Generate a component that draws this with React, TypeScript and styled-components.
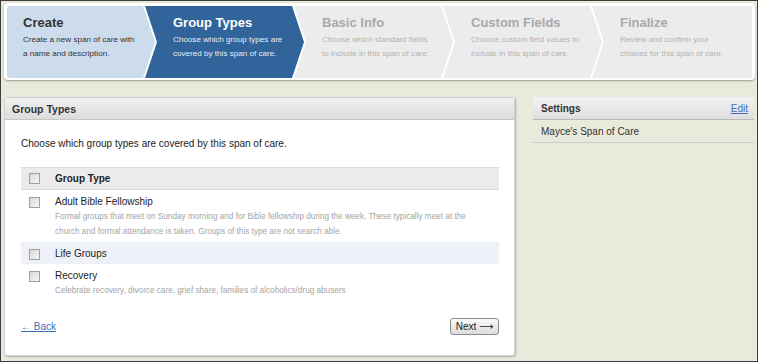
import styled, { createGlobalStyle } from "styled-components";

const GlobalStyle = createGlobalStyle`
  html, body {
    margin: 0;
    padding: 0;
    background: #e9e9dc;
  }
  body {
    font-family: "Liberation Sans", Arial, sans-serif;
    color: #222;
  }
`;

const Frame = styled.div`
  width: 758px;
  height: 362px;
  box-sizing: border-box;
  border: 1px solid #3c3c3c;
  background: #e9e9dc;
  padding: 2px 2px 0 3px;
  display: flex;
  flex-direction: column;
  overflow: hidden;
`;

const Wizard = styled.div`
  background: #fff;
  border-radius: 4px;
  padding: 3px 3px 2px 3px;
  box-shadow: 0 1px 2px rgba(0, 0, 0, 0.35);
`;

const Track = styled.div`
  display: flex;
  height: 72px;
  border-radius: 3px;
  overflow: hidden;
`;

type StepState = "done" | "active" | "todo";
type StepPos = "first" | "middle" | "last";

const clips: Record<StepPos, string> = {
  first: "polygon(0 0, calc(100% - 12px) 0, 100% 50%, calc(100% - 12px) 100%, 0 100%)",
  middle:
    "polygon(0 0, calc(100% - 12px) 0, 100% 50%, calc(100% - 12px) 100%, 0 100%, 12px 50%)",
  last: "polygon(0 0, 100% 0, 100% 100%, 0 100%, 12px 50%)",
};

const stepBg: Record<StepState, string> = {
  done: "#cddcec",
  active: "#31649a",
  todo: "#ececec",
};

const Step = styled.div<{ $state: StepState; $pos: StepPos }>`
  box-sizing: border-box;
  flex: ${(p) => (p.$pos === "last" ? "1" : "none")};
  width: ${(p) => (p.$pos === "first" ? "148px" : "159px")};
  margin-left: ${(p) => (p.$pos === "first" ? "0" : "-10px")};
  padding: 9px 0 0 ${(p) => (p.$pos === "first" ? "16px" : "28px")};
  background: ${(p) => stepBg[p.$state]};
  clip-path: ${(p) => clips[p.$pos]};
  color: ${(p) => (p.$state === "active" ? "#fff" : p.$state === "done" ? "#333" : "#a9a9a9")};
`;

const StepTitle = styled.div`
  font-size: 13px;
  font-weight: bold;
  line-height: 16px;
`;

const StepDesc = styled.div<{ $state: StepState }>`
  margin-top: 2px;
  font-size: 8.1px;
  line-height: 14px;
  color: ${(p) => (p.$state === "active" ? "#e6eef7" : p.$state === "done" ? "#333" : "#b2b2b2")};
`;

const Content = styled.div`
  display: flex;
  align-items: flex-start;
  gap: 18px;
  margin-top: 17px;
`;

const Panel = styled.div`
  width: 511px;
  box-sizing: border-box;
  background: #fff;
  border: 1px solid #d2d2d2;
  border-radius: 3px;
  box-shadow: 1px 1px 2px rgba(0, 0, 0, 0.25);
`;

const PanelHeader = styled.div`
  height: 22px;
  box-sizing: border-box;
  padding-left: 7px;
  display: flex;
  align-items: center;
  font-size: 10.5px;
  font-weight: bold;
  color: #333;
  background: linear-gradient(#f1f1f1, #dcdcdc);
  border-bottom: 1px solid #c6c6c6;
`;

const PanelBody = styled.div`
  padding: 17px 15px 20px 16px;
`;

const Intro = styled.div`
  font-size: 10px;
  line-height: 14px;
  color: #222;
  margin-bottom: 16px;
`;

const Table = styled.div`
  display: flex;
  flex-direction: column;
`;

const Row = styled.div<{ $variant?: "head" | "alt" }>`
  display: flex;
  box-sizing: border-box;
  padding: ${(p) => (p.$variant === "head" ? "0" : "5px 0 3px 0")};
  height: ${(p) => (p.$variant === "head" ? "23px" : "auto")};
  align-items: ${(p) => (p.$variant === "head" ? "center" : "flex-start")};
  background: ${(p) =>
    p.$variant === "head" ? "#ebebeb" : p.$variant === "alt" ? "#eef2f8" : "transparent"};
  border-top: ${(p) => (p.$variant === "head" ? "1px solid #dcdcdc" : "none")};
  border-bottom: ${(p) => (p.$variant === "head" ? "1px solid #dcdcdc" : "none")};
`;

const CheckCell = styled.div<{ $head?: boolean }>`
  width: 34px;
  flex: none;
  padding-left: 8px;
  padding-top: ${(p) => (p.$head ? "0" : "2px")};
  box-sizing: border-box;
  display: flex;
`;

const Check = styled.span`
  display: block;
  width: 11px;
  height: 11px;
  box-sizing: border-box;
  border: 1px solid #a0a0a0;
  background: linear-gradient(135deg, #d8d8d8, #f7f7f7);
`;

const NameCell = styled.div`
  flex: 1;
`;

const HeadLabel = styled.div`
  font-size: 10px;
  font-weight: bold;
  color: #222;
`;

const Name = styled.div`
  font-size: 10px;
  line-height: 14px;
  color: #222;
`;

const Desc = styled.div`
  margin-top: 0;
  font-size: 8.2px;
  line-height: 15px;
  color: #a4a4a4;
`;

const Footer = styled.div`
  display: flex;
  justify-content: space-between;
  align-items: center;
  margin-top: 17px;
`;

const BackLink = styled.a`
  font-size: 10px;
  color: #3b6fb6;
  text-decoration: underline;
  cursor: pointer;
`;

const Button = styled.button`
  width: 49px;
  height: 17px;
  padding: 0;
  box-sizing: border-box;
  font-family: "Liberation Sans", "DejaVu Sans", Arial, sans-serif;
  font-size: 10px;
  color: #222;
  border: 1px solid #8c8c8c;
  border-radius: 3px;
  background: linear-gradient(#fafafa, #dcdcdc);
`;

const Side = styled.div`
  width: 221px;
`;

const SideHeader = styled.div`
  height: 23px;
  box-sizing: border-box;
  padding: 0 6px 0 8px;
  display: flex;
  align-items: center;
  justify-content: space-between;
  background: linear-gradient(#f3f3f3, #dedede);
  border-bottom: 1px solid #b9b9b9;
`;

const SideTitle = styled.span`
  font-size: 10px;
  font-weight: bold;
  color: #333;
`;

const EditLink = styled.a`
  font-size: 10px;
  color: #3b6fb6;
  text-decoration: underline;
  cursor: pointer;
`;

const SideItem = styled.div`
  height: 23px;
  box-sizing: border-box;
  padding-left: 8px;
  display: flex;
  align-items: center;
  font-size: 10px;
  color: #333;
  border-bottom: 1px solid #c9c9c9;
`;

const steps: { title: string; lines: string[]; state: StepState }[] = [
  { title: "Create", lines: ["Create a new span of care with", "a name and description."], state: "done" },
  { title: "Group Types", lines: ["Choose which group types are", "covered by this span of care."], state: "active" },
  { title: "Basic Info", lines: ["Choose which standard fields", "to include in this span of care."], state: "todo" },
  { title: "Custom Fields", lines: ["Choose custom field values to", "include in this span of care."], state: "todo" },
  { title: "Finalize", lines: ["Review and confirm your", "choices for this span of care."], state: "todo" },
];

const groupTypes = [
  {
    name: "Adult Bible Fellowship",
    desc: [
      "Formal groups that meet on Sunday morning and for Bible fellowship during the week. These typically meet at the",
      "church and formal attendance is taken. Groups of this type are not search able.",
    ],
  },
  { name: "Life Groups", desc: [] },
  { name: "Recovery", desc: ["Celebrate recovery, divorce care, grief share, families of alcoholics/drug abusers"] },
];

export default function App() {
  return (
    <>
      <GlobalStyle />
      <Frame>
        <Wizard>
          <Track>
            {steps.map((s, i) => (
              <Step
                key={s.title}
                $state={s.state}
                $pos={i === 0 ? "first" : i === steps.length - 1 ? "last" : "middle"}
              >
                <StepTitle>{s.title}</StepTitle>
                <StepDesc $state={s.state}>
                  {s.lines[0]}
                  <br />
                  {s.lines[1]}
                </StepDesc>
              </Step>
            ))}
          </Track>
        </Wizard>

        <Content>
          <Panel>
            <PanelHeader>Group Types</PanelHeader>
            <PanelBody>
              <Intro>Choose which group types are covered by this span of care.</Intro>
              <Table>
                <Row $variant="head">
                  <CheckCell $head>
                    <Check />
                  </CheckCell>
                  <HeadLabel>Group Type</HeadLabel>
                </Row>
                {groupTypes.map((g, i) => (
                  <Row key={g.name} $variant={i % 2 === 1 ? "alt" : undefined}>
                    <CheckCell>
                      <Check />
                    </CheckCell>
                    <NameCell>
                      <Name>{g.name}</Name>
                      {g.desc.length > 0 && (
                        <Desc>
                          {g.desc.map((line, j) => (
                            <div key={j}>{line}</div>
                          ))}
                        </Desc>
                      )}
                    </NameCell>
                  </Row>
                ))}
              </Table>
              <Footer>
                <BackLink>← Back</BackLink>
                <Button>Next ⟶</Button>
              </Footer>
            </PanelBody>
          </Panel>

          <Side>
            <SideHeader>
              <SideTitle>Settings</SideTitle>
              <EditLink>Edit</EditLink>
            </SideHeader>
            <SideItem>Mayce's Span of Care</SideItem>
          </Side>
        </Content>
      </Frame>
    </>
  );
}
